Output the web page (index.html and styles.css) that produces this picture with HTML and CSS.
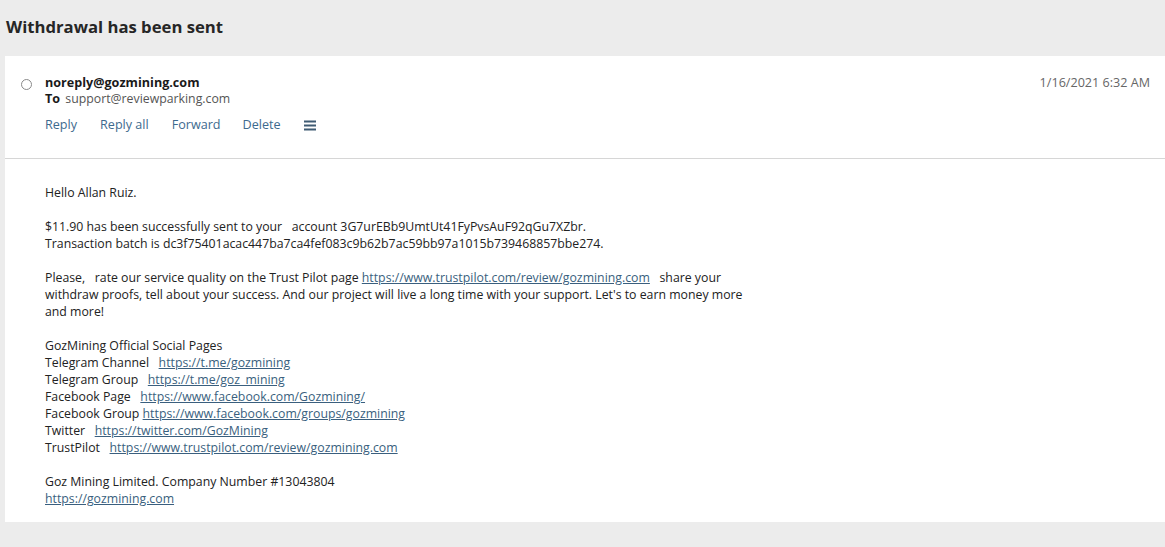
FILE: index.html
```html
<!DOCTYPE html>
<html>
<head>
<meta charset="utf-8">
<link rel="stylesheet" href="styles.css">
</head>
<body>
<div class="page">
  <h1 class="title">Withdrawal has been sent</h1>
  <div class="card">
    <div class="header">
      <div class="radio"></div>
      <div class="meta">
        <div class="from">noreply@gozmining.com</div>
        <div class="to"><b>To</b> support@reviewparking.com</div>
        <div class="actions">
          <span class="act">Reply</span>
          <span class="act">Reply all</span>
          <span class="act">Forward</span>
          <span class="act">Delete</span>
          <span class="menu"><svg width="12" height="11" viewBox="0 0 12 11"><rect x="0" y="0.5" width="12" height="2" fill="#3f5b73"/><rect x="0" y="4.5" width="12" height="2" fill="#3f5b73"/><rect x="0" y="8.5" width="12" height="2" fill="#3f5b73"/></svg></span>
        </div>
      </div>
      <div class="date">1/16/2021 6:32 AM</div>
    </div>
    <div class="body">
      <p>Hello Allan Ruiz.</p>
      <p>$11.90 has been successfully sent to your &nbsp; account 3G7urEBb9UmtUt41FyPvsAuF92qGu7XZbr.<br>Transaction batch is dc3f75401acac447ba7ca4fef083c9b62b7ac59bb97a1015b739468857bbe274.</p>
      <p>Please, &nbsp; rate our service quality on the Trust Pilot page <a href="#">https://www.trustpilot.com/review/gozmining.com</a> &nbsp; share your<br>withdraw proofs, tell about your success. And our project will live a long time with your support. Let's to earn money more<br>and more!</p>
      <p>GozMining Official Social Pages<br>Telegram Channel &nbsp; <a href="#">https://t.me/gozmining</a><br>Telegram Group &nbsp; <a href="#">https://t.me/goz_mining</a><br>Facebook Page &nbsp; <a href="#">https://www.facebook.com/Gozmining/</a><br>Facebook Group <a href="#">https://www.facebook.com/groups/gozmining</a><br>Twitter &nbsp; <a href="#">https://twitter.com/GozMining</a><br>TrustPilot &nbsp; <a href="#">https://www.trustpilot.com/review/gozmining.com</a></p>
      <p>Goz Mining Limited. Company Number #13043804<br><a href="#">https://gozmining.com</a></p>
    </div>
  </div>
</div>
</body>
</html>
```
FILE: styles.css
```css
html, body {
  margin: 0;
  padding: 0;
  background: #ececec;
}
.page {
  font-family: "Open Sans", "Noto Sans", sans-serif;
  color: #1f1f1f;
  height: 547px;
  overflow: hidden;
}
.title {
  margin: 0;
  padding: 15px 0 0 6px;
  height: 56px;
  box-sizing: border-box;
  font-size: 16.7px;
  font-weight: 700;
  color: #262626;
  line-height: 24px;
}
.card {
  margin-left: 5px;
  background: #fff;
  height: 466px;
}
.header {
  display: flex;
  align-items: flex-start;
  padding: 19px 15px 0 16px;
  height: 103px;
  box-sizing: border-box;
  border-bottom: 1px solid #d6d6d6;
}
.radio {
  width: 9px;
  height: 9px;
  border: 1px solid #8a8a8a;
  border-radius: 50%;
  margin-top: 4px;
  margin-right: 13px;
  flex: none;
}
.meta {
  flex: 1;
  font-size: 12.6px;
  line-height: 16px;
}
.from {
  font-weight: 700;
  color: #1a1a1a;
}
.to {
  color: #555;
  font-size: 12.3px;
}
.to b {
  color: #1a1a1a;
  font-size: 12.6px;
  margin-right: 2px;
}
.actions {
  display: flex;
  align-items: center;
  margin-top: 10px;
}
.act {
  color: #3d6a8e;
  font-size: 12.6px;
  margin-right: 23px;
}
.act:nth-child(3) {
  margin-right: 22px;
}
.menu {
  display: flex;
}
.date {
  font-size: 12.6px;
  color: #666;
  line-height: 16px;
}
.body {
  padding: 25px 40px 0 40px;
  font-size: 12.3px;
  line-height: 17px;
  color: #222;
}
.body p {
  margin: 0 0 17px 0;
}
.body a {
  color: #3a5f7e;
  text-decoration: underline;
}
```
